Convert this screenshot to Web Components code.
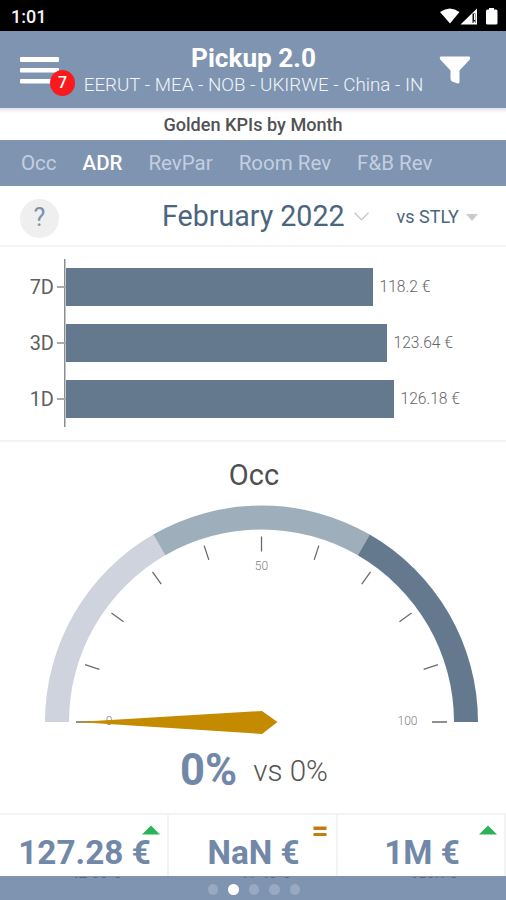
<!DOCTYPE html>
<html lang="en">
<head>
<meta charset="utf-8">
<title>Pickup 2.0</title>
<style>
    body {
        margin: 0;
        background: #fff;
        font-family: Roboto, "Liberation Sans", sans-serif;
    }
</style>
</head>
<body>
<pickup-app>
    <status-bar>1:01</status-bar>
    <app-header badge="7">
        <span slot="title">Pickup 2.0</span>
        <span slot="subtitle">EERUT - MEA - NOB - UKIRWE - China - IN</span>
    </app-header>
    <section-title>Golden KPIs by Month</section-title>
    <kpi-tabs>
        <span>Occ</span>
        <span class="active">ADR</span>
        <span>RevPar</span>
        <span>Room Rev</span>
        <span>F&amp;B Rev</span>
    </kpi-tabs>
    <period-picker>
        <span slot="period">February 2022</span>
        <span slot="compare">vs STLY</span>
    </period-picker>
    <bar-chart>
        <bar-row label="7D" value="118.2" size="307"></bar-row>
        <bar-row label="3D" value="123.64" size="321"></bar-row>
        <bar-row label="1D" value="126.18" size="328"></bar-row>
    </bar-chart>
    <gauge-chart>
        <span slot="title">Occ</span>
        <span slot="value">0%</span>
        <span slot="compare">vs 0%</span>
    </gauge-chart>
    <kpi-strip>
        <kpi-card trend="up">127.28 €<span slot="previous">47.00 €</span></kpi-card>
        <kpi-card trend="equal">NaN €<span slot="previous">41.42 €</span></kpi-card>
        <kpi-card trend="up">1M €<span slot="previous">650K €</span></kpi-card>
    </kpi-strip>
    <page-dots count="5" current="1"></page-dots>
</pickup-app>

<script>
class BaseElement extends HTMLElement {
    constructor() {
        super();
        this.attachShadow({ mode: 'open' });
    }

    connectedCallback() {
        const template = document.createElement('template');
        template.innerHTML = `<style>${this.styles}</style>${this.markup}`;
        this.shadowRoot.replaceChildren(template.content.cloneNode(true));
    }
}

class PickupApp extends BaseElement {
    get styles() {
        return `
            :host {
                display: flex;
                flex-direction: column;
                width: 506px;
                height: 900px;
                overflow: hidden;
                background: #fff;
                --blue: #7f94b0;
                --steel: #64798e;
                --line: #f3f3f4;
            }
        `;
    }

    get markup() {
        return `<slot></slot>`;
    }
}

class StatusBar extends BaseElement {
    get styles() {
        return `
            :host {
                display: flex;
                align-items: center;
                justify-content: space-between;
                box-sizing: border-box;
                height: 31px;
                padding: 2px 6px 0 11px;
                background: #000;
                color: #f4f4f4;
                font-size: 18px;
                font-weight: 500;
            }
            svg { display: block; }
        `;
    }

    get markup() {
        return `
            <span><slot></slot></span>
            <svg width="60" height="18" viewBox="0 0 60 18" fill="#fff">
                <path d="M0 4 Q10 -3 19.500 4 L10 15.500 Z"/>
                <path d="M37 .5 V16.500 H20.500 Z"/>
                <path d="M32.500 5.500 H35.500 V15 H32.500 Z" fill="#111"/>
                <path d="M34 6 H35.200 V12 H34 Z M33.500 13.500 H35 V15 H33.500 Z"/>
                <path d="M49 0 H54 V1.500 H56 Q57.500 1.500 57.500 3 V15 Q57.500 16.500 56 16.500 H47.500 Q46 16.500 46 15 V3 Q46 1.500 47.500 1.500 H49 Z"/>
            </svg>
        `;
    }
}

class AppHeader extends BaseElement {
    get styles() {
        return `
            :host {
                display: grid;
                grid-template-columns: 64px 379px 63px;
                box-sizing: border-box;
                height: 77px;
                background: var(--blue);
                color: #fff;
            }
            .menu { position: relative; padding: 26px 0 0 20px; }
            .menu svg, .filter svg { display: block; }
            .badge {
                position: absolute;
                left: 50px;
                top: 39px;
                width: 25px;
                height: 26px;
                border-radius: 50%;
                background: #fa1a1e;
                font-size: 16px;
                font-weight: 500;
                line-height: 26px;
                text-align: center;
            }
            .titles { display: flex; flex-direction: column; align-items: center; padding-top: 12px; }
            .title { font-size: 26.2px; font-weight: 700; line-height: 30px; }
            .subtitle { font-size: 18.8px; font-weight: 300; line-height: 24px; white-space: nowrap; color: #f0f4fa; }
            .filter { padding-top: 25px; margin-left: -4px; }
        `;
    }

    get markup() {
        return `
            <div class="menu">
                <svg width="39" height="28" viewBox="0 0 39 28" fill="#fff">
                    <rect width="39" height="5" rx="1"/>
                    <rect y="11" width="39" height="4.500" rx="1"/>
                    <rect y="22" width="39" height="4.500" rx="1"/>
                </svg>
                <span class="badge">${this.getAttribute('badge')}</span>
            </div>
            <div class="titles">
                <span class="title"><slot name="title"></slot></span>
                <span class="subtitle"><slot name="subtitle"></slot></span>
            </div>
            <div class="filter">
                <svg width="32" height="28" viewBox="0 0 32 28" fill="#fff">
                    <path d="M1.500 .5 H30.500 Q32 1.500 30.800 3.500 L20.500 14.500 V26 Q20.500 28 18 27.200 L13 25.500 Q11.500 24.500 11.500 22.500 V14.500 L1.200 3.500 Q0 1.500 1.500 .5 Z"/>
                </svg>
            </div>
        `;
    }
}

class SectionTitle extends BaseElement {
    get styles() {
        return `
            :host {
                display: block;
                box-sizing: border-box;
                height: 32px;
                padding-top: 3px;
                background: linear-gradient(#e2e3e7, #fff 5px);
                font-size: 18.1px;
                font-weight: 500;
                line-height: 27px;
                text-align: center;
                color: #505255;
            }
        `;
    }

    get markup() {
        return `<slot></slot>`;
    }
}

class KpiTabs extends BaseElement {
    get styles() {
        return `
            :host {
                display: flex;
                gap: 26px;
                box-sizing: border-box;
                height: 46px;
                padding-left: 21px;
                background: var(--blue);
                font-size: 20.5px;
                line-height: 46px;
                color: #c3cfe0;
            }
            ::slotted(.active) { color: #fff; font-weight: 500; }
        `;
    }

    get markup() {
        return `<slot></slot>`;
    }
}

class PeriodPicker extends BaseElement {
    get styles() {
        return `
            :host {
                display: flex;
                align-items: center;
                box-sizing: border-box;
                height: 61px;
                padding: 1px 0 0 20px;
                border-bottom: 2px solid var(--line);
                color: #4b657e;
            }
            .help {
                width: 39px;
                height: 39px;
                margin: 5px 103px 0 0;
                border-radius: 50%;
                background: #efefef;
                color: #7a90ad;
                font-size: 25px;
                line-height: 38px;
                text-align: center;
            }
            .period { font-size: 28.6px; }
            .compare { font-size: 18px; margin-left: 28px; }
            .chevron { margin-left: 9px; }
            .caret { margin: 3px 0 0 7px; }
        `;
    }

    get markup() {
        return `
            <div class="help">?</div>
            <span class="period"><slot name="period"></slot></span>
            <svg class="chevron" width="15" height="9" viewBox="0 0 15 9" fill="none" stroke="#c6cacf" stroke-width="1.500">
                <path d="M.5 .8 L7.500 7.800 L14.500 .8"/>
            </svg>
            <span class="compare"><slot name="compare"></slot></span>
            <svg class="caret" width="12" height="7" viewBox="0 0 12 7" fill="#c9cbcd"><path d="M0 0 H12 L6 7 Z"/></svg>
        `;
    }
}

class BarChart extends BaseElement {
    get styles() {
        return `
            :host {
                display: block;
                box-sizing: border-box;
                height: 195px;
                padding-top: 12px;
                border-bottom: 2px solid var(--line);
            }
            .plot {
                display: flex;
                flex-direction: column;
                justify-content: space-around;
                height: 168px;
                background: linear-gradient(#8b8d90, #8b8d90) 64px 0 / 1.5px 100% no-repeat;
            }
        `;
    }

    get markup() {
        return `<div class="plot"><slot></slot></div>`;
    }
}

class BarRow extends BaseElement {
    get styles() {
        return `
            :host { display: flex; align-items: center; height: 37.5px; }
            .label { width: 54px; text-align: right; font-size: 20px; color: #606060; }
            .tick { width: 9px; height: 1.5px; margin: 0 0 0 3px; background: #aaa; }
            .bar { width: ${this.getAttribute('size')}px; height: 100%; background: var(--steel); }
            .value { margin-left: 6.5px; font-size: 15.6px; font-weight: 300; color: #666; }
        `;
    }

    get markup() {
        return `
            <span class="label">${this.getAttribute('label')}</span>
            <span class="tick"></span>
            <span class="bar"></span>
            <span class="value">${this.getAttribute('value')} €</span>
        `;
    }
}

class GaugeChart extends BaseElement {
    get styles() {
        return `
            :host {
                display: flex;
                flex-direction: column;
                box-sizing: border-box;
                height: 373px;
                border-bottom: 2px solid var(--line);
            }
            .title { padding-top: 14px; font-size: 29px; line-height: 38px; text-align: center; color: #505050; padding-left: 2px; }
            svg { display: block; margin-top: 3px; flex: none; }
            .values { display: flex; align-items: center; justify-content: center; gap: 16px; margin-top: 4px; padding-left: 2px; line-height: 60px; }
            .value { font-size: 43.5px; font-weight: 700; color: #7188a8; }
            .compare { margin-top: -1px; font-size: 29.6px; font-weight: 300; color: #555; }
        `;
    }

    // degrees go counterclockwise from the right end of the dial
    point(radius, degrees) {
        const angle = degrees * Math.PI / 180;
        const x = 261.5 + radius * Math.cos(angle);
        const y = 225 - radius * Math.sin(angle);
        return `${x.toFixed(2)} ${y.toFixed(2)}`;
    }

    band(from, to, color) {
        return `<path fill="${color}" d="M${this.point(216.5, from)} A216.500 216.500 0 0 0 ${this.point(216.5, to)} L${this.point(192.5, to)} A192.500 192.500 0 0 1 ${this.point(192.5, from)} Z"/>`;
    }

    get ticks() {
        let d = '';
        for (let i = 0; i <= 10; i++) {
            d += `M${this.point(185.5, i * 18)} L${this.point(170.5, i * 18)} `;
        }
        return `<path d="${d}" stroke="#6b6b6b" stroke-width="1.300"/>`;
    }

    get markup() {
        return `
            <div class="title"><slot name="title"></slot></div>
            <svg width="506" height="240" viewBox="0 0 506 240">
                ${this.band(120, 180, '#cfd3dd')}
                ${this.band(60, 120, '#9eafbb')}
                ${this.band(0, 60, '#64798e')}
                ${this.ticks}
                <g font-size="12" font-weight="300" fill="#808080" text-anchor="middle">
                    <text x="109" y="228">0</text>
                    <text x="261.5" y="73">50</text>
                    <text x="407.5" y="228">100</text>
                </g>
                <path d="M77 225 L262 214 L277.500 225 L262 237 Z" fill="#c58b00"/>
            </svg>
            <div class="values">
                <span class="value"><slot name="value"></slot></span>
                <span class="compare"><slot name="compare"></slot></span>
            </div>
        `;
    }
}

class KpiStrip extends BaseElement {
    get styles() {
        return `
            :host { display: grid; grid-template-columns: 169px 169px 168px; height: 61px; }
        `;
    }

    get markup() {
        return `<slot></slot>`;
    }
}

class KpiCard extends BaseElement {
    get styles() {
        return `
            :host {
                position: relative;
                display: block;
                height: 63px;
                overflow: hidden;
                text-align: center;
            }
            .value {
                box-sizing: border-box;
                height: 61px;
                padding: 15px 0 0 2px;
                border-right: 2px solid var(--line);
                font-size: 33.3px;
                font-weight: 700;
                line-height: 46px;
                color: #7188a8;
            }
            .previous { margin: -3px 0 0 22px; font-size: 15px; line-height: 20px; color: #606870; }
            svg { position: absolute; right: 9px; top: 10px; }
        `;
    }

    get icon() {
        if (this.getAttribute('trend') === 'up') {
            return `<svg width="18" height="12" viewBox="0 0 18 12"><path d="M0 9.500 L9 .5 L18 9.500 Z" fill="#2bb457"/></svg>`;
        }
        return `<svg width="18" height="14" viewBox="0 0 18 14"><path d="M2.500 1.500 H15.500 V5 H2.500 Z M2.500 8 H15.500 V11 H2.500 Z" fill="#c07d12"/></svg>`;
    }

    get markup() {
        return `
            ${this.icon}
            <div class="value"><slot></slot></div>
            <div class="previous"><slot name="previous"></slot></div>
        `;
    }
}

class PageDots extends BaseElement {
    get styles() {
        return `
            :host {
                display: flex;
                align-items: center;
                justify-content: center;
                gap: 10px;
                height: 24px;
                padding: 3px 0 0 2px;
                box-sizing: border-box;
                background: var(--blue);
            }
            i { width: 10.5px; height: 10.5px; border-radius: 50%; background: #98a9c1; }
            i.current { background: #fff; }
        `;
    }

    get markup() {
        const count = Number(this.getAttribute('count'));
        const current = Number(this.getAttribute('current'));
        let dots = '';
        for (let i = 0; i < count; i++) {
            dots += `<i${i === current ? ' class="current"' : ''}></i>`;
        }
        return dots;
    }
}

customElements.define('pickup-app', PickupApp);
customElements.define('status-bar', StatusBar);
customElements.define('app-header', AppHeader);
customElements.define('section-title', SectionTitle);
customElements.define('kpi-tabs', KpiTabs);
customElements.define('period-picker', PeriodPicker);
customElements.define('bar-chart', BarChart);
customElements.define('bar-row', BarRow);
customElements.define('gauge-chart', GaugeChart);
customElements.define('kpi-strip', KpiStrip);
customElements.define('kpi-card', KpiCard);
customElements.define('page-dots', PageDots);
</script>
</body>
</html>
